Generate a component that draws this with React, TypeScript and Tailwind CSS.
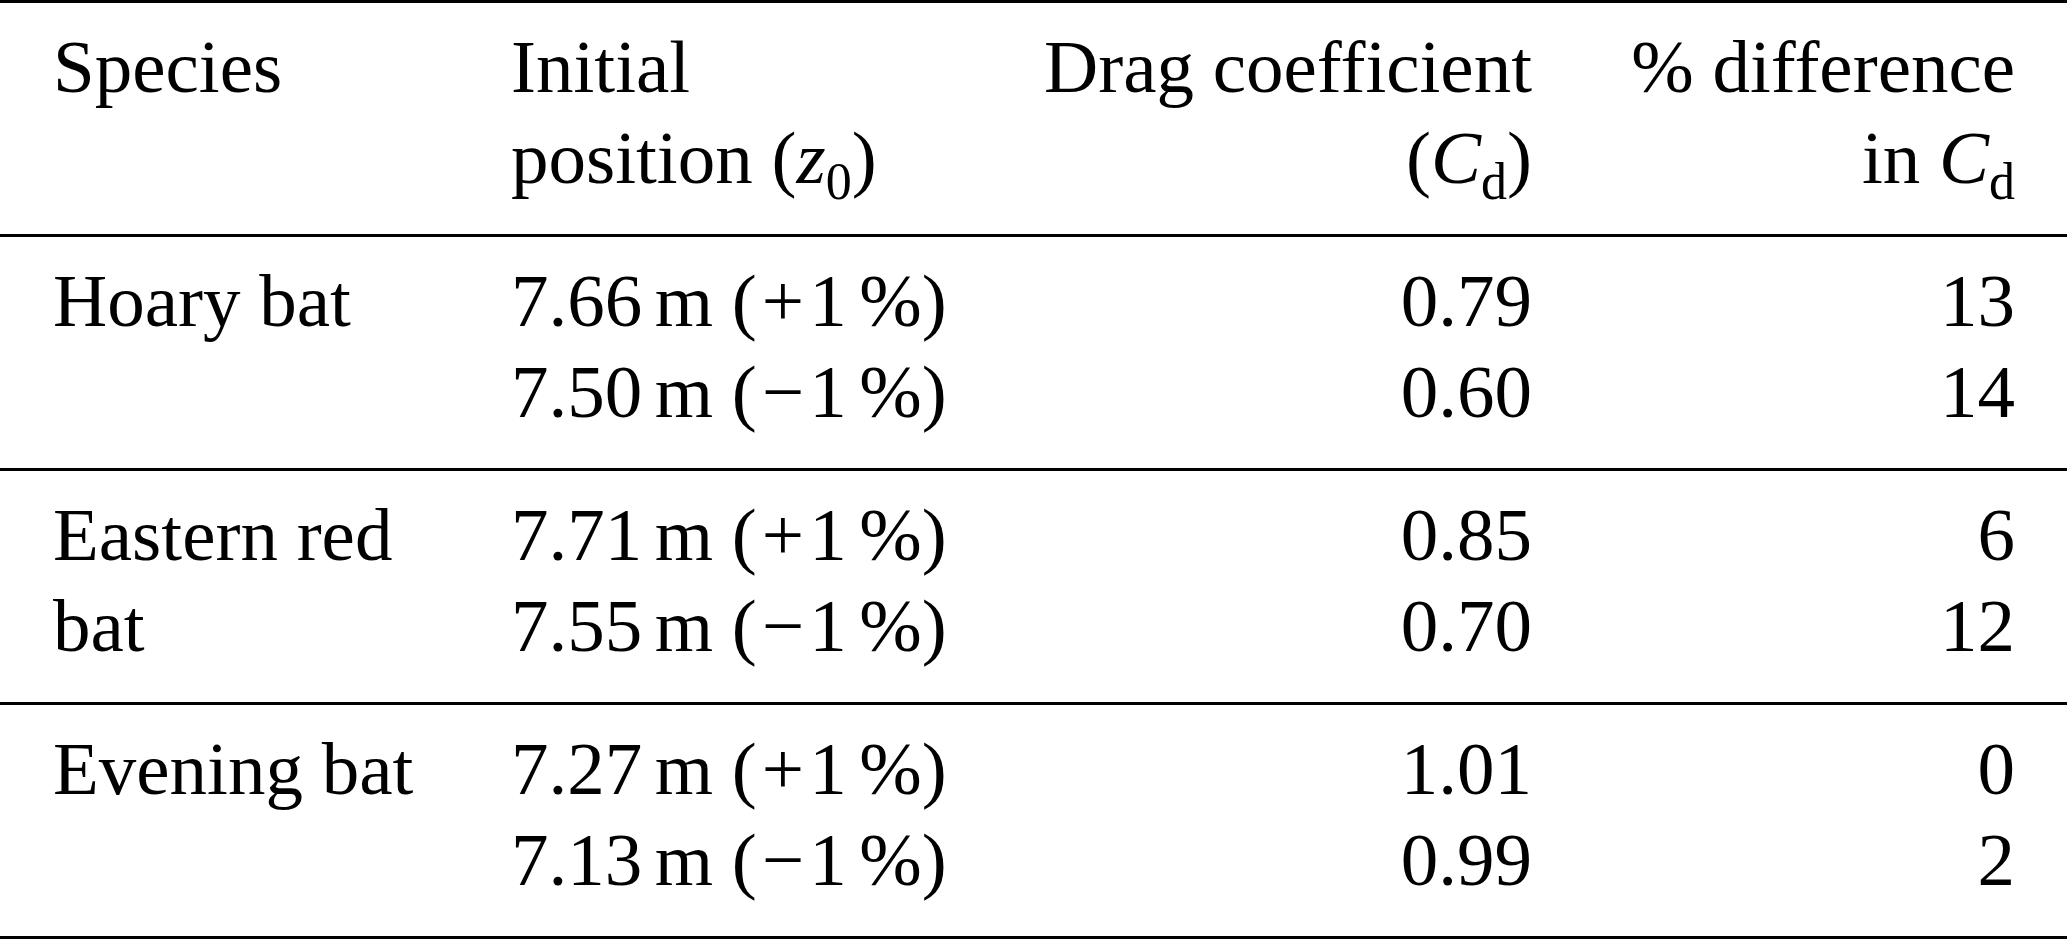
import React from "react";

const Sub = ({ children }: { children: React.ReactNode }) => (
  <span className="relative top-[16px] text-[52px] leading-none not-italic">{children}</span>
);

const Cd = () => (
  <>
    <span className="italic">C</span>
    <Sub>d</Sub>
  </>
);

const Pos = ({ v, sign }: { v: string; sign: string }) => (
  <div>
    {v}
    <span className="ml-[0.1667em]">m</span> (<span className="px-[5px]">{sign}</span>1
    <span className="ml-[0.1667em]">%</span>)
  </div>
);

type Group = { species: React.ReactNode; rows: { v: string; sign: string; cd: string; diff: string }[] };

const groups: Group[] = [
  {
    species: <div>Hoary bat</div>,
    rows: [
      { v: "7.66", sign: "+", cd: "0.79", diff: "13" },
      { v: "7.50", sign: "\u2212", cd: "0.60", diff: "14" },
    ],
  },
  {
    species: (
      <>
        <div>Eastern red</div>
        <div>bat</div>
      </>
    ),
    rows: [
      { v: "7.71", sign: "+", cd: "0.85", diff: "6" },
      { v: "7.55", sign: "\u2212", cd: "0.70", diff: "12" },
    ],
  },
  {
    species: <div>Evening bat</div>,
    rows: [
      { v: "7.27", sign: "+", cd: "1.01", diff: "0" },
      { v: "7.13", sign: "\u2212", cd: "0.99", diff: "2" },
    ],
  },
];

export default function App() {
  return (
    <div className="w-[2067px] h-[940px] bg-white text-black font-['Liberation_Serif','Times_New_Roman',serif] text-[75px] leading-[91px]">
      <div className="grid grid-cols-[458px_500px_521px_483px] border-t-[3px] border-black pl-[53px] pr-[52px] pt-[18px] pb-[31px]">
        <div>Species</div>
        <div>
          <div>Initial</div>
          <div>
            position (<span className="italic">z</span>
            <Sub>0</Sub>)
          </div>
        </div>
        <div className="text-right">
          <div>Drag coefficient</div>
          <div>
            (<Cd />)
          </div>
        </div>
        <div className="text-right">
          <div>% difference</div>
          <div>
            in <Cd />
          </div>
        </div>
      </div>
      {groups.map((g, i) => (
        <div
          key={i}
          className={
            "grid grid-cols-[458px_500px_521px_483px] border-t-[3px] border-black pl-[53px] pr-[52px] pt-[18px] pb-[31px]" +
            (i === groups.length - 1 ? " border-b-[3px]" : "")
          }
        >
          <div>{g.species}</div>
          <div>
            {g.rows.map((r, j) => (
              <Pos key={j} v={r.v} sign={r.sign} />
            ))}
          </div>
          <div className="text-right">
            {g.rows.map((r, j) => (
              <div key={j}>{r.cd}</div>
            ))}
          </div>
          <div className="text-right">
            {g.rows.map((r, j) => (
              <div key={j}>{r.diff}</div>
            ))}
          </div>
        </div>
      ))}
    </div>
  );
}
